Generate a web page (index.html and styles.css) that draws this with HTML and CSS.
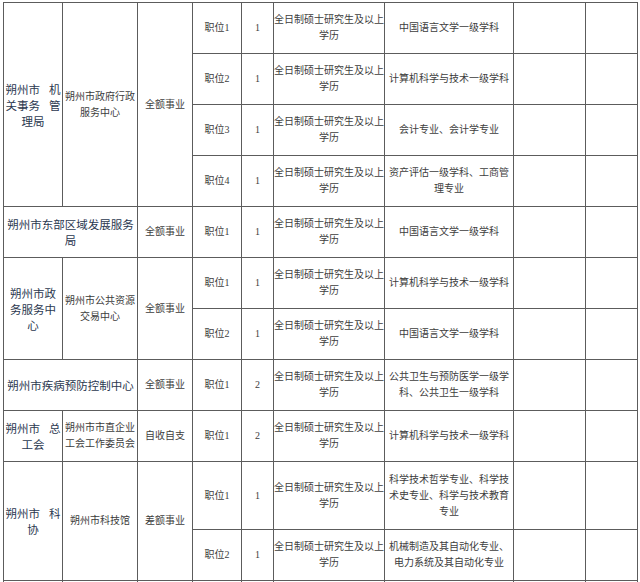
FILE: index.html
```html
<!DOCTYPE html>
<html lang="zh-CN">
<head>
<meta charset="utf-8">
<title>岗位表</title>
<link rel="stylesheet" href="styles.css">
</head>
<body>
<div class="page">
<table class="jobs">
  <colgroup>
    <col class="c-org"><col class="c-sub"><col class="c-type"><col class="c-pos"><col class="c-num"><col class="c-edu"><col class="c-major"><col class="c-x1"><col class="c-x2">
  </colgroup>
  <tbody>
    <tr class="r">
      <td rowspan="4" class="org">朔州市<span class="gap"> </span>机<br>关事务<span class="gap"> </span>管<br>理局</td>
      <td rowspan="4">朔州市政府行政<br>服务中心</td>
      <td rowspan="4">全额事业</td>
      <td>职位1</td><td>1</td><td>全日制硕士研究生及以上<br>学历</td><td>中国语言文学一级学科</td><td></td><td></td>
    </tr>
    <tr class="r">
      <td>职位2</td><td>1</td><td>全日制硕士研究生及以上<br>学历</td><td>计算机科学与技术一级学科</td><td></td><td></td>
    </tr>
    <tr class="r">
      <td>职位3</td><td>1</td><td>全日制硕士研究生及以上<br>学历</td><td>会计专业、会计学专业</td><td></td><td></td>
    </tr>
    <tr class="r">
      <td>职位4</td><td>1</td><td>全日制硕士研究生及以上<br>学历</td><td>资产评估一级学科、工商管<br>理专业</td><td></td><td></td>
    </tr>
    <tr class="r">
      <td colspan="2" class="org">朔州市东部区域发展服务<br>局</td>
      <td>全额事业</td>
      <td>职位1</td><td>1</td><td>全日制硕士研究生及以上<br>学历</td><td>中国语言文学一级学科</td><td></td><td></td>
    </tr>
    <tr class="r">
      <td rowspan="2" class="org">朔州市政<br>务服务中<br>心</td>
      <td rowspan="2">朔州市公共资源<br>交易中心</td>
      <td rowspan="2">全额事业</td>
      <td>职位1</td><td>1</td><td>全日制硕士研究生及以上<br>学历</td><td>计算机科学与技术一级学科</td><td></td><td></td>
    </tr>
    <tr class="r">
      <td>职位2</td><td>1</td><td>全日制硕士研究生及以上<br>学历</td><td>中国语言文学一级学科</td><td></td><td></td>
    </tr>
    <tr class="r">
      <td colspan="2" class="org">朔州市疾病预防控制中心</td>
      <td>全额事业</td>
      <td>职位1</td><td>2</td><td>全日制硕士研究生及以上<br>学历</td><td>公共卫生与预防医学一级学<br>科、公共卫生一级学科</td><td></td><td></td>
    </tr>
    <tr class="r">
      <td class="org">朔州市<span class="gap"> </span>总<br>工会</td>
      <td>朔州市市直企业<br>工会工作委员会</td>
      <td>自收自支</td>
      <td>职位1</td><td>2</td><td>全日制硕士研究生及以上<br>学历</td><td>计算机科学与技术一级学科</td><td></td><td></td>
    </tr>
    <tr class="r-tall">
      <td rowspan="2" class="org">朔州市<span class="gap"> </span>科<br>协</td>
      <td rowspan="2">朔州市科技馆</td>
      <td rowspan="2">差额事业</td>
      <td>职位1</td><td>1</td><td>全日制硕士研究生及以上<br>学历</td><td>科学技术哲学专业、科学技<br>术史专业、科学与技术教育<br>专业</td><td></td><td></td>
    </tr>
    <tr class="r">
      <td>职位2</td><td>1</td><td>全日制硕士研究生及以上<br>学历</td><td>机械制造及其自动化专业、<br>电力系统及其自动化专业</td><td></td><td></td>
    </tr>
    <tr class="r">
      <td></td><td></td><td></td><td></td><td></td><td></td><td></td><td></td><td></td>
    </tr>
  </tbody>
</table>
</div>
</body>
</html>
```
FILE: styles.css
```css
html, body {
  margin: 0;
  padding: 0;
  background: #ffffff;
}
.page {
  padding: 2px 0 0 3px;
  height: 582px;
  overflow: hidden;
  box-sizing: border-box;
}
.jobs {
  border-collapse: collapse;
  table-layout: fixed;
  width: 634px;
  font-family: "Liberation Serif", "Noto Sans CJK SC", serif;
  font-size: 10px;
  line-height: 16px;
  color: #3d3d3d;
}
.jobs td {
  border: 1px solid #5c5c5c;
  padding: 0;
  text-align: center;
  vertical-align: middle;
  white-space: nowrap;
  overflow: hidden;
}
.jobs td.org {
  font-family: "Noto Sans CJK SC", sans-serif;
  font-size: 11.5px;
  color: #2b3850;
}
.gap {
  display: inline-block;
  width: 9px;
}
.r { height: 51px; }
.r-tall { height: 68px; }
.c-org { width: 59px; }
.c-sub { width: 75px; }
.c-type { width: 55px; }
.c-pos { width: 49px; }
.c-num { width: 32px; }
.c-edu { width: 111px; }
.c-major { width: 129px; }
.c-x1 { width: 72px; }
.c-x2 { width: 52px; }
```
